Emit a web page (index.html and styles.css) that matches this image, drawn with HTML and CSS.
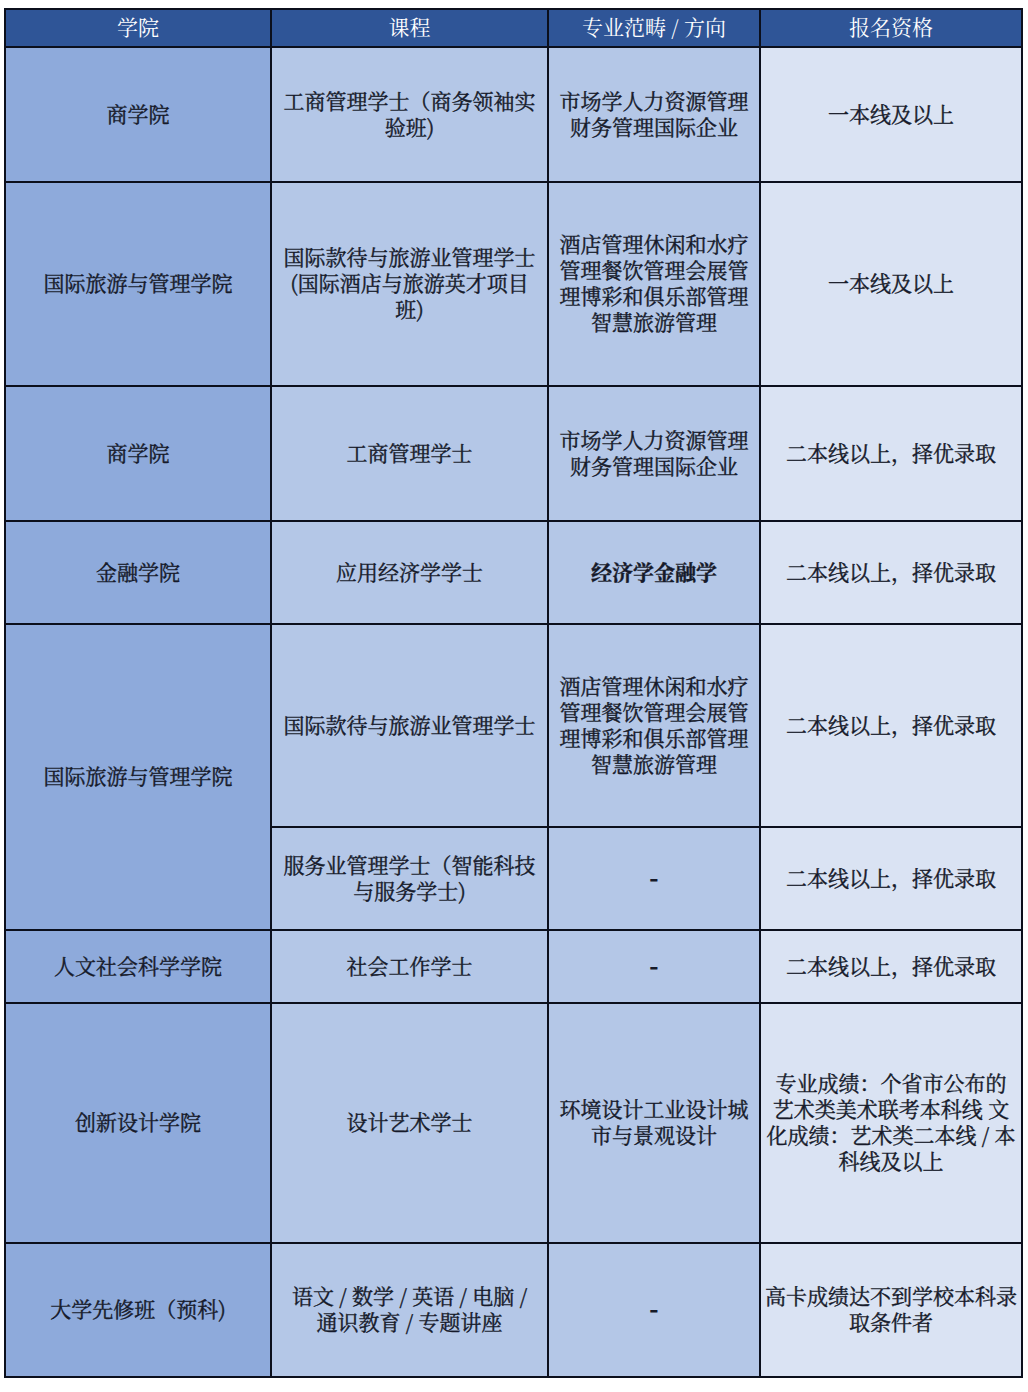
FILE: index.html
```html
<!DOCTYPE html>
<html lang="zh-CN">
<head>
<meta charset="utf-8">
<title>招生表</title>
<link rel="stylesheet" href="styles.css">
</head>
<body>
<table class="grid">
  <colgroup>
    <col class="c1"><col class="c2"><col class="c3"><col class="c4">
  </colgroup>
  <thead>
    <tr class="head">
      <th>学院</th><th>课程</th><th>专业范畴 / 方向</th><th>报名资格</th>
    </tr>
  </thead>
  <tbody>
    <tr class="r1">
      <td class="college">商学院</td>
      <td class="course">工商管理学士（商务领袖实<br>验班)</td>
      <td class="major">市场学人力资源管理<br>财务管理国际企业</td>
      <td class="req">一本线及以上</td>
    </tr>
    <tr class="r2">
      <td class="college">国际旅游与管理学院</td>
      <td class="course">国际款待与旅游业管理学士<br>(国际酒店与旅游英才项目<br>班)</td>
      <td class="major">酒店管理休闲和水疗<br>管理餐饮管理会展管<br>理博彩和俱乐部管理<br>智慧旅游管理</td>
      <td class="req">一本线及以上</td>
    </tr>
    <tr class="r3">
      <td class="college">商学院</td>
      <td class="course">工商管理学士</td>
      <td class="major">市场学人力资源管理<br>财务管理国际企业</td>
      <td class="req">二本线以上，择优录取</td>
    </tr>
    <tr class="r4">
      <td class="college">金融学院</td>
      <td class="course">应用经济学学士</td>
      <td class="major strong">经济学金融学</td>
      <td class="req">二本线以上，择优录取</td>
    </tr>
    <tr class="r5">
      <td class="college" rowspan="2">国际旅游与管理学院</td>
      <td class="course">国际款待与旅游业管理学士</td>
      <td class="major">酒店管理休闲和水疗<br>管理餐饮管理会展管<br>理博彩和俱乐部管理<br>智慧旅游管理</td>
      <td class="req">二本线以上，择优录取</td>
    </tr>
    <tr class="r6">
      <td class="course">服务业管理学士（智能科技<br>与服务学士)</td>
      <td class="major dash">-</td>
      <td class="req">二本线以上，择优录取</td>
    </tr>
    <tr class="r7">
      <td class="college">人文社会科学学院</td>
      <td class="course">社会工作学士</td>
      <td class="major dash">-</td>
      <td class="req">二本线以上，择优录取</td>
    </tr>
    <tr class="r8">
      <td class="college">创新设计学院</td>
      <td class="course">设计艺术学士</td>
      <td class="major">环境设计工业设计城<br>市与景观设计</td>
      <td class="req">专业成绩：个省市公布的<br>艺术类美术联考本科线 文<br>化成绩：艺术类二本线 / 本<br>科线及以上</td>
    </tr>
    <tr class="r9">
      <td class="college">大学先修班（预科)</td>
      <td class="course">语文 / 数学 / 英语 / 电脑 /<br>通识教育 / 专题讲座</td>
      <td class="major dash">-</td>
      <td class="req">高卡成绩达不到学校本科录<br>取条件者</td>
    </tr>
  </tbody>
</table>
</body>
</html>
```

FILE: styles.css
```css
html, body {
  margin: 0;
  padding: 0;
  background: #ffffff;
}

body {
  padding: 8px 0 0 4px;
  font-family: "Noto Serif CJK SC", "Liberation Serif", "Noto Sans CJK SC", serif;
}

.grid {
  border-collapse: collapse;
  table-layout: fixed;
  width: 1017px;
  color: #161a2a;
  font-size: 21px;
  line-height: 26px;
}

.c1 { width: 266px; }
.c2 { width: 277px; }
.c3 { width: 212px; }
.c4 { width: 262px; }

.grid th,
.grid td {
  border: 2px solid #0b0f1c;
  text-align: center;
  vertical-align: middle;
  padding: 0 2px 4px;
  white-space: nowrap;
}

.grid td {
  -webkit-text-stroke: 0.4px #161a2a;
}

.head th {
  background: #2f5597;
  color: #ffffff;
  font-weight: normal;
  font-size: 21px;
  height: 32px;
  padding: 0 2px 4px;
}

.college { background: #8eaadb; }
.course { background: #b4c7e7; }
.major { background: #b4c7e7; }
.req { background: #dae3f3; }

.strong { font-weight: 700; -webkit-text-stroke: 0.2px #161a2a; }

.grid td.dash {
  font-weight: 700;
  -webkit-text-stroke: 1.2px #161a2a;
}

.r1 td { height: 129px; }
.r2 td { height: 198px; }
.r3 td { height: 129px; }
.r4 td { height: 97px; }
.r5 td { height: 197px; }
.r6 td { height: 97px; }
.r7 td { height: 67px; }
.r8 td { height: 234px; }
.r9 td { height: 128px; }
```
